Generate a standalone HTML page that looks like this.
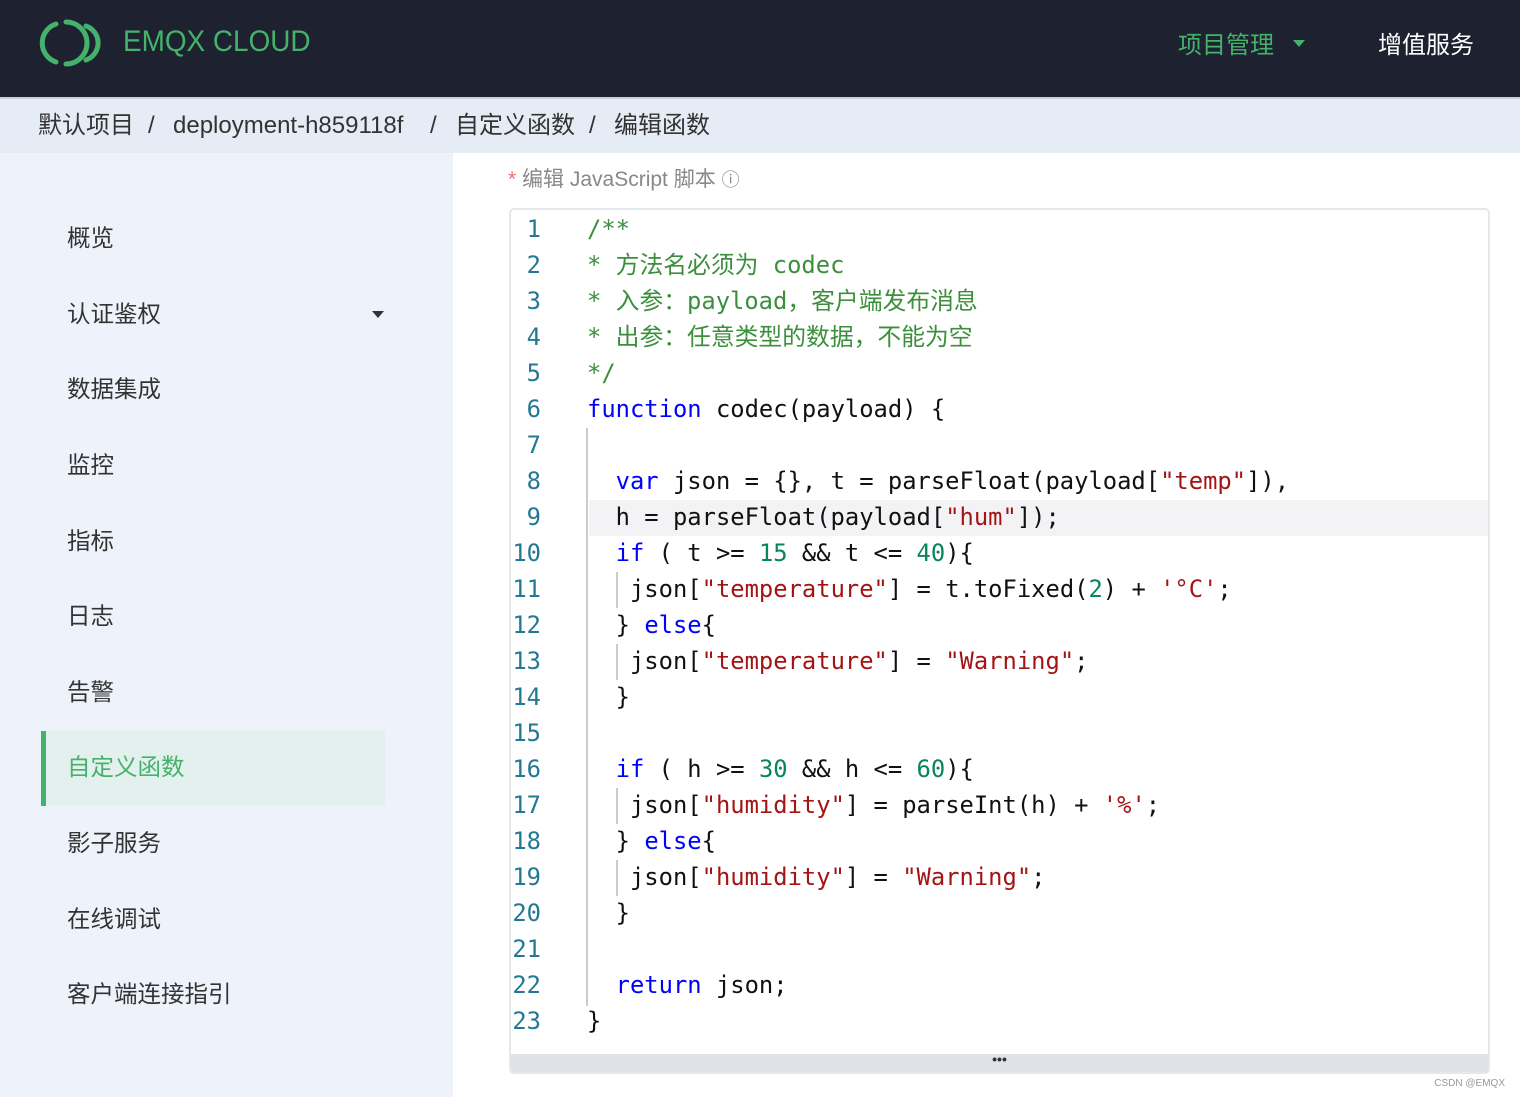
<!DOCTYPE html>
<html><head><meta charset="utf-8"><style>
*{margin:0;padding:0;box-sizing:border-box}
body{width:1520px;height:1097px;overflow:hidden;background:#fff;font-family:"Liberation Sans","Noto Sans CJK SC",sans-serif;position:relative}
.hdr{position:absolute;left:0;top:0;width:1520px;height:97px;background:#1e2230}
.logo{position:absolute;left:123px;top:25px;color:#45b26b;font-size:30px;transform:scaleX(0.93);transform-origin:left}
.nav1{position:absolute;left:1178px;top:25px;color:#45b26b;font-size:24px}
.nav2{position:absolute;left:1378px;top:25px;color:#fff;font-size:24px}
.tri{position:absolute;left:1293px;top:40px;width:0;height:0;border-left:6px solid transparent;border-right:6px solid transparent;border-top:7px solid #45b26b}
.bc{position:absolute;left:0;top:97px;width:1520px;height:56px;background:#e6ecf6;border-top:2px solid #c9ced8;font-size:24px;color:#333}
.bc span{position:absolute;top:12px;height:30px;line-height:30px;display:block}
.side{position:absolute;left:0;top:153px;width:453px;height:944px;background:#eef3fb}
.item{position:absolute;left:67px;font-size:23.5px;color:#333;line-height:30px;margin-top:-1px}
.act{position:absolute;left:41px;top:731px;width:344px;height:75px;background:#e3f0ee;border-left:5px solid #45b26b}
.lbl{position:absolute;left:508px;top:163px;font-size:21px;color:#888}
.ed{position:absolute;left:509px;top:208px;width:981px;height:866px;border:2px solid #e4e7ed;border-radius:5px;background:#fff;overflow:hidden}
.bar{position:absolute;left:0;bottom:0;width:100%;height:18px;background:#dfe3e8;text-align:center;font-size:14px;line-height:10px;color:#333;font-weight:bold}
.code{position:absolute;left:0;top:1px;width:100%;font-family:"DejaVu Sans Mono","Noto Sans CJK SC",monospace;font-size:23.8px;line-height:36px;white-space:pre;color:#111}
.ln{position:absolute;left:0;width:30px;text-align:right;color:#237893}
.tx{position:absolute;left:76px}
.c{color:#3c8f3c}.k{color:#0000ff}.s{color:#a31515}.n{color:#098658}
.g{position:absolute;width:2px;background:#ccc}
.hl{position:absolute;left:78px;top:290px;width:900px;height:36px;background:#f3f3f5}
.wm{position:absolute;right:15px;bottom:8px;font-size:10px;color:#999}
</style></head><body>
<div class="hdr">
<svg style="position:absolute;left:36px;top:18px" width="72" height="50" viewBox="0 0 72 50"><path d="M20 6 A20 20 0 0 0 20 44" fill="none" stroke="#45b26b" stroke-width="5" stroke-linecap="round"/><path d="M30 4 A21 21 0 0 1 30 46" fill="none" stroke="#45b26b" stroke-width="5" stroke-linecap="round"/><path d="M50 8 A18 18 0 0 1 50 42" fill="none" stroke="#45b26b" stroke-width="5" stroke-linecap="round"/></svg>
<div class="logo">EMQX CLOUD</div>
<div class="nav1">项目管理</div><div class="tri"></div>
<div class="nav2">增值服务</div>
</div>
<div class="bc"><span style="left:38px">默认项目</span><span style="left:148px">/</span><span style="left:173px">deployment-h859118f</span><span style="left:430px">/</span><span style="left:455px">自定义函数</span><span style="left:589px">/</span><span style="left:614px">编辑函数</span></div>
<div class="side">
<div class="item" style="top:71px">概览</div>
<div class="item" style="top:147px">认证鉴权</div>
<div style="position:absolute;left:372px;top:158px;border-left:6px solid transparent;border-right:6px solid transparent;border-top:7px solid #333"></div>
<div class="item" style="top:222px">数据集成</div>
<div class="item" style="top:298px">监控</div>
<div class="item" style="top:374px">指标</div>
<div class="item" style="top:449px">日志</div>
<div class="item" style="top:525px">告警</div>
<div class="act" style="top:578px"></div>
<div class="item" style="top:600px;color:#45b26b">自定义函数</div>
<div class="item" style="top:676px">影子服务</div>
<div class="item" style="top:752px">在线调试</div>
<div class="item" style="top:827px">客户端连接指引</div>
</div>
<div class="lbl"><span style="color:#f56c6c">*</span>  编辑 JavaScript 脚本 <span style="font-size:18px">ⓘ</span></div>
<div class="ed">
<div class="hl"></div>
<div class="g" style="left:75px;top:218px;height:578px"></div>
<div class="g" style="left:105px;top:362px;height:36px"></div>
<div class="g" style="left:105px;top:434px;height:36px"></div>
<div class="g" style="left:105px;top:578px;height:36px"></div>
<div class="g" style="left:105px;top:650px;height:36px"></div>
<div class="code">
<div class="ln" style="top:0">1</div><div class="tx c" style="top:0">/**</div>
<div class="ln" style="top:36px">2</div><div class="tx c" style="top:36px">* 方法名必须为 codec</div>
<div class="ln" style="top:72px">3</div><div class="tx c" style="top:72px">* 入参：payload，客户端发布消息</div>
<div class="ln" style="top:108px">4</div><div class="tx c" style="top:108px">* 出参：任意类型的数据，不能为空</div>
<div class="ln" style="top:144px">5</div><div class="tx c" style="top:144px">*/</div>
<div class="ln" style="top:180px">6</div><div class="tx" style="top:180px"><span class="k">function</span> codec(payload) {</div>
<div class="ln" style="top:216px">7</div>
<div class="ln" style="top:252px">8</div><div class="tx" style="top:252px">  <span class="k">var</span> json = {}, t = parseFloat(payload[<span class="s">"temp"</span>]),</div>
<div class="ln" style="top:288px">9</div><div class="tx" style="top:288px">  h = parseFloat(payload[<span class="s">"hum"</span>]);</div>
<div class="ln" style="top:324px">10</div><div class="tx" style="top:324px">  <span class="k">if</span> ( t &gt;= <span class="n">15</span> &amp;&amp; t &lt;= <span class="n">40</span>){</div>
<div class="ln" style="top:360px">11</div><div class="tx" style="top:360px">   json[<span class="s">"temperature"</span>] = t.toFixed(<span class="n">2</span>) + <span class="s">'°C'</span>;</div>
<div class="ln" style="top:396px">12</div><div class="tx" style="top:396px">  } <span class="k">else</span>{</div>
<div class="ln" style="top:432px">13</div><div class="tx" style="top:432px">   json[<span class="s">"temperature"</span>] = <span class="s">"Warning"</span>;</div>
<div class="ln" style="top:468px">14</div><div class="tx" style="top:468px">  }</div>
<div class="ln" style="top:504px">15</div>
<div class="ln" style="top:540px">16</div><div class="tx" style="top:540px">  <span class="k">if</span> ( h &gt;= <span class="n">30</span> &amp;&amp; h &lt;= <span class="n">60</span>){</div>
<div class="ln" style="top:576px">17</div><div class="tx" style="top:576px">   json[<span class="s">"humidity"</span>] = parseInt(h) + <span class="s">'%'</span>;</div>
<div class="ln" style="top:612px">18</div><div class="tx" style="top:612px">  } <span class="k">else</span>{</div>
<div class="ln" style="top:648px">19</div><div class="tx" style="top:648px">   json[<span class="s">"humidity"</span>] = <span class="s">"Warning"</span>;</div>
<div class="ln" style="top:684px">20</div><div class="tx" style="top:684px">  }</div>
<div class="ln" style="top:720px">21</div>
<div class="ln" style="top:756px">22</div><div class="tx" style="top:756px">  <span class="k">return</span> json;</div>
<div class="ln" style="top:792px">23</div><div class="tx" style="top:792px">}</div>
</div>
<div class="bar">•••</div>
</div>
<div class="wm">CSDN @EMQX</div>
</body></html>
